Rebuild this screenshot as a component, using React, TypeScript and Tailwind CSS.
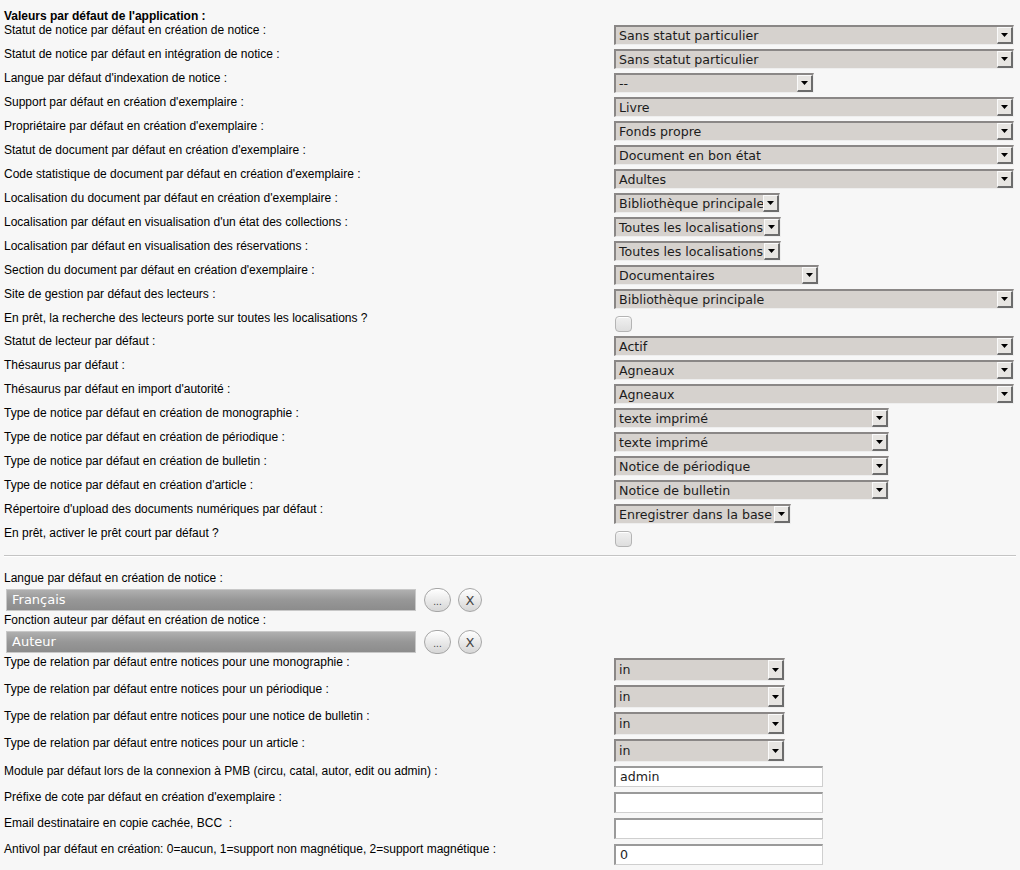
import React from "react";

type Row =
  | { label: string; kind: "select"; value: string; w: string }
  | { label: string; kind: "check" };

const rows: Row[] = [
  { label: "Statut de notice par défaut en création de notice :", kind: "select", value: "Sans statut particulier", w: "w-[400px]" },
  { label: "Statut de notice par défaut en intégration de notice :", kind: "select", value: "Sans statut particulier", w: "w-[400px]" },
  { label: "Langue par défaut d'indexation de notice :", kind: "select", value: "--", w: "w-[200px]" },
  { label: "Support par défaut en création d'exemplaire :", kind: "select", value: "Livre", w: "w-[400px]" },
  { label: "Propriétaire par défaut en création d'exemplaire :", kind: "select", value: "Fonds propre", w: "w-[400px]" },
  { label: "Statut de document par défaut en création d'exemplaire :", kind: "select", value: "Document en bon état", w: "w-[400px]" },
  { label: "Code statistique de document par défaut en création d'exemplaire :", kind: "select", value: "Adultes", w: "w-[400px]" },
  { label: "Localisation du document par défaut en création d'exemplaire :", kind: "select", value: "Bibliothèque principale", w: "w-[166px]" },
  { label: "Localisation par défaut en visualisation d'un état des collections :", kind: "select", value: "Toutes les localisations", w: "w-[167px]" },
  { label: "Localisation par défaut en visualisation des réservations :", kind: "select", value: "Toutes les localisations", w: "w-[167px]" },
  { label: "Section du document par défaut en création d'exemplaire :", kind: "select", value: "Documentaires", w: "w-[205px]" },
  { label: "Site de gestion par défaut des lecteurs :", kind: "select", value: "Bibliothèque principale", w: "w-[400px]" },
  { label: "En prêt, la recherche des lecteurs porte sur toutes les localisations ?", kind: "check" },
  { label: "Statut de lecteur par défaut :", kind: "select", value: "Actif", w: "w-[400px]" },
  { label: "Thésaurus par défaut :", kind: "select", value: "Agneaux", w: "w-[400px]" },
  { label: "Thésaurus par défaut en import d'autorité :", kind: "select", value: "Agneaux", w: "w-[400px]" },
  { label: "Type de notice par défaut en création de monographie :", kind: "select", value: "texte imprimé", w: "w-[275px]" },
  { label: "Type de notice par défaut en création de périodique :", kind: "select", value: "texte imprimé", w: "w-[275px]" },
  { label: "Type de notice par défaut en création de bulletin :", kind: "select", value: "Notice de périodique", w: "w-[275px]" },
  { label: "Type de notice par défaut en création d'article :", kind: "select", value: "Notice de bulletin", w: "w-[275px]" },
  { label: "Répertoire d'upload des documents numériques par défaut :", kind: "select", value: "Enregistrer dans la base", w: "w-[177px]" },
  { label: "En prêt, activer le prêt court par défaut ?", kind: "check" },
];

const relRows = [
  "Type de relation par défaut entre notices pour une monographie :",
  "Type de relation par défaut entre notices pour un périodique :",
  "Type de relation par défaut entre notices pour une notice de bulletin :",
  "Type de relation par défaut entre notices pour un article :",
];

const textRows = [
  { label: "Module par défaut lors de la connexion à PMB (circu, catal, autor, edit ou admin) :", value: "admin" },
  { label: "Préfixe de cote par défaut en création d'exemplaire :", value: "" },
  { label: "Email destinataire en copie cachée, BCC\u00a0 :", value: "" },
  { label: "Antivol par défaut en création: 0=aucun, 1=support non magnétique, 2=support magnétique :", value: "0" },
];

const dv = "font-['DejaVu_Sans',sans-serif]";

function Arrow() {
  return (
    <svg width="7" height="4" viewBox="0 0 7 4">
      <polygon points="0,0 7,0 3.5,4" fill="#000" />
    </svg>
  );
}

function Select({ value, w, h }: { value: string; w: string; h: string }) {
  return (
    <div
      className={`${w} ${h} flex bg-[#d6d2ce] border-t-2 border-l-2 border-t-[#8a8786] border-l-[#8a8786] border-b border-r border-b-[#eeeeee] border-r-[#eeeeee]`}
    >
      <span className={`flex-1 flex items-center overflow-hidden whitespace-nowrap pl-[3px] text-[12.6px] leading-[16px] text-[#1c1c1c] ${dv}`}>
        {value}
      </span>
      <span className="w-[16px] shrink-0 flex items-center justify-center bg-[#e7e5e2] border-t border-l border-t-[#fafafa] border-l-[#fafafa] border-b-2 border-r-2 border-b-[#6c6c6c] border-r-[#6c6c6c]">
        <Arrow />
      </span>
    </div>
  );
}

function Check() {
  return (
    <div className="w-[17px] h-[16px] ml-[1px] rounded-[4px] border border-[#b4b4b4] bg-linear-to-b from-[#f0f0f0] to-[#dedede] shadow-[inset_0_1px_0_#ffffff]" />
  );
}

function GrayInput({ value }: { value: string }) {
  return (
    <div className="flex items-center h-[22px]">
      <div
        className={`w-[410px] h-[22px] border border-[#c8c8c8] bg-linear-to-b from-[#b0b0b0] via-[#979797] to-[#8c8c8c] text-white pl-[5px] text-[13px] leading-[20px] ${dv}`}
      >
        {value}
      </div>
      <div className="ml-[8px] w-[27px] h-[24px] rounded-full border border-[#a6a6a6] bg-linear-to-b from-white to-[#d6d6d6] flex items-end justify-center pb-[4px] text-[10px] leading-[10px] text-[#444] font-['Liberation_Sans',sans-serif]">
        ...
      </div>
      <div className={`ml-[7px] w-[24px] h-[24px] rounded-full border border-[#a6a6a6] bg-linear-to-b from-white to-[#d6d6d6] flex items-center justify-center text-[13px] leading-[13px] text-[#444] ${dv}`}>
        X
      </div>
    </div>
  );
}

export default function App() {
  return (
    <div className="min-h-[870px] w-[1020px] bg-[#f7f7f7] text-[12px] text-black font-['Liberation_Sans',Arial,sans-serif]">
      <div className="pt-[9px] pl-[4px] font-bold leading-[14px]">Valeurs par défaut de l'application :</div>
      {rows.map((r, i) =>
        r.kind === "select" ? (
          <div key={i} className="flex h-[24px]">
            <div className="w-[614px] shrink-0 pl-[4px] leading-[14px] whitespace-nowrap">{r.label}</div>
            <div className="pt-[2px]">
              <Select value={r.value} w={r.w} h="h-[20px]" />
            </div>
          </div>
        ) : (
          <div key={i} className="flex h-[23px]">
            <div className="w-[614px] shrink-0 pl-[4px] leading-[14px] whitespace-nowrap">{r.label}</div>
            <div className="pt-[5px]">
              <Check />
            </div>
          </div>
        )
      )}
      <div className="mt-[6px] mx-[4px] border-t border-b border-t-[#c4c4c4] border-b-[#ffffff]" />
      <div className="mt-[14px] pl-[4px] leading-[14px]">Langue par défaut en création de notice :</div>
      <div className="mt-[4px] pl-[6px]">
        <GrayInput value="Français" />
      </div>
      <div className="mt-[2px] pl-[4px] leading-[14px]">Fonction auteur par défaut en création de notice :</div>
      <div className="mt-[4px] pl-[6px]">
        <GrayInput value="Auteur" />
      </div>
      <div className="mt-[2px]">
        {relRows.map((l, i) => (
          <div key={i} className="flex h-[27px]">
            <div className="w-[614px] shrink-0 pl-[4px] leading-[14px] whitespace-nowrap">{l}</div>
            <div className="pt-[3px]">
              <Select value="in" w="w-[171px]" h="h-[23px]" />
            </div>
          </div>
        ))}
        {textRows.map((t, i) => (
          <div key={i} className="flex h-[26px]">
            <div className="w-[614px] shrink-0 pl-[4px] pt-[1px] leading-[14px] whitespace-nowrap">{t.label}</div>
            <div className="pt-[3px]">
              <div
                className={`w-[209px] h-[21px] bg-white border-t-2 border-l-2 border-t-[#9a9a9a] border-l-[#9a9a9a] border-b border-r border-b-[#cfcfcf] border-r-[#cfcfcf] pl-[4px] text-[12.6px] leading-[17px] text-[#1c1c1c] ${dv}`}
              >
                {t.value}
              </div>
            </div>
          </div>
        ))}
      </div>
    </div>
  );
}
